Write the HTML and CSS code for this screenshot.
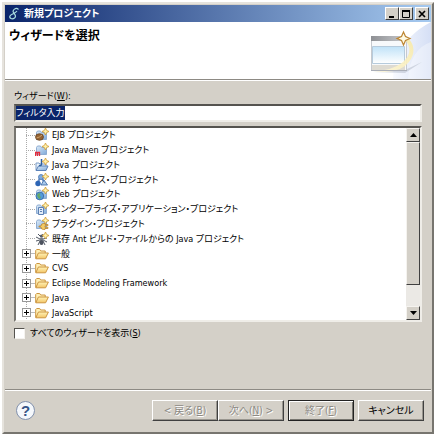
FILE: index.html
```html
<!DOCTYPE html>
<html lang="ja">
<head>
<meta charset="utf-8">
<title>新規プロジェクト</title>
<link rel="stylesheet" href="styles.css">
<script src="script.js" defer></script>
</head>
<body>
<svg class="defs" aria-hidden="true">
  <defs>
    <linearGradient id="blue" x1="0" y1="0" x2="1" y2="1"><stop offset="0" stop-color="#dcebf8"/><stop offset="1" stop-color="#7fa9d8"/></linearGradient>
    <linearGradient id="gold" x1="0" y1="0" x2="0" y2="1"><stop offset="0" stop-color="#fff3b8"/><stop offset="1" stop-color="#f3c566"/></linearGradient>
    <symbol id="spark" viewBox="0 0 14 14"><path d="M10.5 0 11.6 2.4 14 3.5 11.6 4.6 10.5 7 9.4 4.6 7 3.5 9.4 2.4Z" fill="#fff2a8" stroke="#d09a35" stroke-width=".8"/></symbol>
    <symbol id="project" viewBox="0 0 14 14"><path d="M1.5 11.5v-7l1-1.500h3l1 1.500h5v7z" fill="url(#blue)" stroke="#8fadd2"/></symbol>
    <symbol id="ejb" viewBox="0 0 14 14"><use href="#project"/><ellipse cx="4.500" cy="9" rx="4" ry="3.300" fill="#946333" stroke="#5f3b1b" stroke-width=".7"/><path d="M1.500 10q3-.5 5.500-3" fill="none" stroke="#e0b47c" stroke-width=".8"/><use href="#spark"/></symbol>
    <symbol id="maven" viewBox="0 0 14 14"><use href="#project"/><path d="M.6 13V9.500H2.500V13M2.500 9.500H4.500V13" fill="none" stroke="#e32b3b" stroke-width="1.300"/><use href="#spark"/></symbol>
    <symbol id="java" viewBox="0 0 14 14"><path d="M1 12V5h3l1 1h6v6z" fill="#e8f2fb" stroke="#7c9cc6"/><path d="M1 12.500 3.500 8H13l-2 4.500z" fill="url(#blue)" stroke="#5d83b9"/><path d="M6.500 1v5q0 2-2.500 1.500" fill="none" stroke="#2c5e9e" stroke-width="1.500"/><use href="#spark"/></symbol>
    <symbol id="service" viewBox="0 0 14 14"><path d="M6 3 2 11M6 3l4 8" stroke="#6b8fc4" stroke-width="2"/><circle cx="6" cy="4" r="2.500" fill="#82acdf" stroke="#396aa9" stroke-width=".7"/><circle cx="3" cy="10.500" r="2.700" fill="#2d65b5"/><path d="m6 12 3-5 3.500 5z" fill="#a9c9eb" stroke="#39659f" stroke-width=".8"/><use href="#spark"/></symbol>
    <symbol id="web" viewBox="0 0 14 14"><use href="#project"/><circle cx="4.800" cy="9" r="3.900" fill="#559bd8" stroke="#2f609d" stroke-width=".7"/><path d="M2 8q2-3 3.500-1.500L4.500 8.500 6 10l-1 2q-2 0-3-4" fill="#65a968"/><use href="#spark"/></symbol>
    <symbol id="enterprise" viewBox="0 0 14 14"><use href="#project"/><path d="M3.500 5.500h5v7h-5z" fill="#e1ebf7" stroke="#5d81b4"/><path d="M5 7.500h2m-2 2h2" stroke="#5d81b4"/><use href="#spark"/></symbol>
    <symbol id="plugin" viewBox="0 0 14 14"><use href="#project"/><path d="M4 9h2q0-2.500 2.500-2.500H10v1h3v1.200h-3v1.600h3v1.200h-3v1H8.500Q6 12.500 6 10H4z" fill="#f3cb65" stroke="#b67d27" stroke-width=".7"/><use href="#spark"/></symbol>
    <symbol id="ant" viewBox="0 0 14 14"><path d="m3 2 3 3 2-3M1 5l4 2h3l4-1M1 9l4-1h3l4 2M3 13l2-4h3l2 4" fill="none" stroke="#505763"/><ellipse cx="6.500" cy="4" rx="1.700" ry="1.500" fill="#555c68"/><ellipse cx="6.500" cy="7" rx="1.500" ry="1.800" fill="#747b86"/><ellipse cx="6.500" cy="10.500" rx="2" ry="2.500" fill="#4c535f"/><use href="#spark"/></symbol>
    <symbol id="folder" viewBox="0 0 14 14"><path d="M.7 11.500V3.500l1-1h3l1 1.500h4.500V6" fill="#fff0b5" stroke="#cc9540"/><path d="M.8 11.800 3.400 6H13.400L10.600 11.800z" fill="url(#gold)" stroke="#cc9540"/></symbol>
  </defs>
</svg>
<main class="window">
  <header class="titlebar">
    <svg class="app-icon" viewBox="0 0 12 14" aria-hidden="true"><path d="M10.500 2.500C8 0 4 3 5.500 5.500S9 9 6.500 11 1 11 2 9s5-2.500 7-5" fill="none" stroke="#a9dcdf" stroke-width="1.200"/></svg>
    <h1>新規プロジェクト</h1>
    <div class="controls">
      <button type="button" aria-label="最小化"><svg viewBox="0 0 10 10"><path d="M2 8h5" stroke="#000" stroke-width="2"/></svg></button>
      <button type="button" aria-label="最大化"><svg viewBox="0 0 10 10"><path d="M1.500 1v7.500h7V1M1 1.500h8" fill="none" stroke="#000"/><path d="M1 2h8" stroke="#000" stroke-width="2"/></svg></button>
      <button type="button" aria-label="閉じる"><svg viewBox="0 0 10 10"><path d="m2 2 6 6m0-6L2 8" stroke="#000" stroke-width="1.700"/></svg></button>
    </div>
  </header>
  <section class="banner">
    <h2>ウィザードを選択</h2>
    <svg class="art" viewBox="0 0 80 57" aria-hidden="true">
      <defs>
        <linearGradient id="sky" x1="0" y1="0" x2="0" y2="1"><stop offset="0" stop-color="#c0e2f8"/><stop offset="1" stop-color="#fff"/></linearGradient>
        <linearGradient id="bar"><stop offset="0" stop-color="#8e9094"/><stop offset="1" stop-color="#c8c9cc"/></linearGradient>
        <linearGradient id="wash"><stop offset="0" stop-color="#f8faff"/><stop offset="1" stop-color="#d5dff5"/></linearGradient>
        <linearGradient id="arc" x1="0" y1="1" x2="1" y2="0"><stop offset="0" stop-color="#fff9df"/><stop offset="1" stop-color="#f8e9a4"/></linearGradient>
      </defs>
      <path d="M80 0Q57 12 48 32q-6 13-6 25h38z" fill="url(#wash)"/>
      <path d="M80 20Q59 27 57 57h23z" fill="#fff" opacity=".35"/>
      <path d="m22 50 34-3 15-7-17 11z" fill="#bfc4d2" opacity=".65"/>
      <path d="M20.500 14.500h35v34h-35z" fill="#f7f9fb" stroke="#c6c9ce"/>
      <path d="M20 14h35v5H20z" fill="url(#bar)"/>
      <path d="M21.500 24.500h32v17h-32z" fill="url(#sky)" stroke="#b6cbdc"/>
      <path d="M21 43h33v5H21z" fill="#dedbd2"/>
      <path d="M55 19q8 11-3 21-11 9-30 9 26 4 36-9 9-12 0-23z" fill="url(#arc)" opacity=".9"/>
      <path d="M20 48.500h36" stroke="#aaaeb7"/>
      <path d="M52.500 10 54.500 14.500 59 16.500 54.500 18.500 52.500 23 50.500 18.500 46 16.500 50.500 14.500Z" fill="#fffbe5" stroke="#bd8531" stroke-width="1.200"/>
    </svg>
  </section>
  <section class="content">
    <label class="filter-label" for="filter">ウィザード(<u>W</u>):</label>
    <div class="field"><input id="filter" type="text" value="フィルタ入力"></div>
    <div class="list">
      <ul class="tree">
        <li><svg class="icon"><use href="#ejb"/></svg>EJB プロジェクト</li>
        <li><svg class="icon"><use href="#maven"/></svg>Java Maven プロジェクト</li>
        <li><svg class="icon"><use href="#java"/></svg>Java プロジェクト</li>
        <li><svg class="icon"><use href="#service"/></svg>Web サービス・プロジェクト</li>
        <li><svg class="icon"><use href="#web"/></svg>Web プロジェクト</li>
        <li><svg class="icon"><use href="#enterprise"/></svg>エンタープライズ・アプリケーション・プロジェクト</li>
        <li><svg class="icon"><use href="#plugin"/></svg>プラグイン・プロジェクト</li>
        <li><svg class="icon"><use href="#ant"/></svg>既存 Ant ビルド・ファイルからの Java プロジェクト</li>
        <li class="branch"><svg class="icon"><use href="#folder"/></svg>一般</li>
        <li class="branch"><svg class="icon"><use href="#folder"/></svg>CVS</li>
        <li class="branch"><svg class="icon"><use href="#folder"/></svg>Eclipse Modeling Framework</li>
        <li class="branch"><svg class="icon"><use href="#folder"/></svg>Java</li>
        <li class="branch"><svg class="icon"><use href="#folder"/></svg>JavaScript</li>
      </ul>
      <div class="scrollbar">
        <button type="button" aria-label="上へ"><svg viewBox="0 0 7 4"><path d="M0 4h7L3.500 0z"/></svg></button>
        <div class="thumb"></div>
        <div class="track"></div>
        <button type="button" aria-label="下へ"><svg viewBox="0 0 7 4"><path d="M0 0h7L3.500 4z"/></svg></button>
      </div>
    </div>
    <label class="show-all"><input type="checkbox"><span>すべてのウィザードを表示(<u>S</u>)</span></label>
  </section>
  <footer class="footer">
    <button class="help" type="button" aria-label="ヘルプ">?</button>
    <div class="nav">
      <button class="action" type="button" disabled>&lt; 戻る(<u>B</u>)</button>
      <button class="action" type="button" disabled>次へ(<u>N</u>) &gt;</button>
    </div>
    <button class="action default" type="button" disabled>終了(<u>F</u>)</button>
    <button class="action" type="button">キャンセル</button>
  </footer>
</main>
</body>
</html>
```
FILE: styles.css
```css
*, *::before { box-sizing: border-box; }
body {
  margin: 0;
  padding: 2px;
  background: #fff;
  color: #000;
  font: 9px/14px "DejaVu Sans Condensed", "Noto Sans CJK JP", sans-serif;
  font-feature-settings: "palt";
}
button, input { font: inherit; font-feature-settings: inherit; color: inherit; }
button { padding: 0; }
h1, h2, ul { margin: 0; padding: 0; }
.defs { position: absolute; width: 0; height: 0; }

.window {
  padding: 1px;
  background: #d4d0c8;
  border: 2px solid;
  border-color: #e6e3dd #77756f #77756f #e6e3dd;
}
.titlebar {
  display: flex;
  align-items: center;
  height: 17px;
  padding: 0 2px;
  background: linear-gradient(90deg, #0a246a, #a6caf0);
  color: #fff;
}
.app-icon { width: 12px; height: 14px; margin: 0 4px 0 1px; }
h1 { flex: 1; font-size: 10px; line-height: 14px; }
.controls { display: flex; }
.controls button {
  width: 14px;
  height: 13px;
  background: #d4d0c8;
  border: 1px solid;
  border-color: #fff #404040 #404040 #fff;
}
.controls button:last-child { margin-left: 2px; }
.controls svg { display: block; width: 10px; height: 10px; margin: auto; }

.banner {
  display: flex;
  justify-content: space-between;
  background: #fff;
  border-bottom: 1px solid #8d8a84;
}
h2 { padding: 5px 4px; font-size: 12px; line-height: 18px; }
.art { width: 80px; height: 57px; }

.content { padding: 8px 9px 0; border-top: 1px solid #fff; }
.filter-label { display: block; }
.field, .list {
  background: #fff;
  border: 2px solid;
  border-color: #55534f #efede8 #efede8 #77756f;
}
.field { display: flex; height: 18px; margin: 1px 0 4px; }
.field input {
  width: 100%;
  min-width: 0;
  padding: 0;
  border: 0;
  outline: 0;
  background: #fff;
}
.field input::selection { background: #0a246a; color: #fff; }
.list { display: flex; height: 196px; }
.tree {
  flex: 1;
  display: grid;
  grid-auto-rows: 1fr;
  list-style: none;
  margin-left: 10px;
  background: linear-gradient(#aaa 50%, transparent 50%) 0 4px / 1px 2px repeat-y;
}
.tree li { display: flex; align-items: center; min-height: 0; white-space: nowrap; }
.tree li::before {
  content: "";
  width: 9px;
  height: 1px;
  background: repeating-linear-gradient(90deg, #aaa 0 1px, transparent 1px 2px);
}
.tree .branch { background: linear-gradient(#bbb, #bbb) left center / 9px 1px no-repeat; }
.tree .branch::before {
  height: 9px;
  margin: 0 4px 0 -4px;
  border: 1px solid #999;
  background:
    linear-gradient(#000, #000) center / 5px 1px no-repeat,
    linear-gradient(#000, #000) center / 1px 5px no-repeat,
    #fff;
}
.icon { width: 14px; height: 14px; margin-right: 3px; }
.scrollbar { display: flex; flex-direction: column; width: 14px; }
.scrollbar button, .thumb {
  background: #d4d0c8;
  border: 1px solid;
  border-color: #f5f3ef #404040 #404040 #f5f3ef;
}
.scrollbar button { height: 14px; }
.scrollbar svg { display: block; width: 7px; height: 4px; margin: auto; }
.thumb { flex: 143; }
.track { flex: 21; background: #ebe9e5; }

.show-all { display: flex; align-items: center; gap: 5px; margin-top: 4px; }
.show-all input {
  appearance: none;
  width: 11px;
  height: 11px;
  margin: 0;
  background: #fff;
  border: 1px solid;
  border-color: #55534f #f5f3ef #f5f3ef #55534f;
}

.footer {
  display: flex;
  align-items: center;
  gap: 4px;
  margin-top: 49px;
  padding: 10px 7px 10px 11px;
  border-top: 1px solid #8d8a84;
  box-shadow: inset 0 1px #fff;
}
.help {
  width: 19px;
  height: 19px;
  margin-right: auto;
  background: #f5f8fc;
  border: 1px solid #8291ad;
  border-radius: 50%;
  color: #365587;
  font: bold 15px/16px "Liberation Sans", sans-serif;
}
.nav { display: flex; }
.action {
  width: 66px;
  height: 21px;
  background: #d4d0c8;
  border: 1px solid;
  border-color: #fff #404040 #404040 #fff;
  box-shadow: inset -1px -1px #99968f;
  font-size: 10px;
}
.action:disabled { color: #8d8a84; text-shadow: 1px 1px #fff; }
.default { border-color: #222; box-shadow: inset 1px 1px #fff, inset -1px -1px #77756f; }
```
FILE: script.js
```javascript
const filter = document.getElementById("filter");
filter.focus();
filter.select();
```
